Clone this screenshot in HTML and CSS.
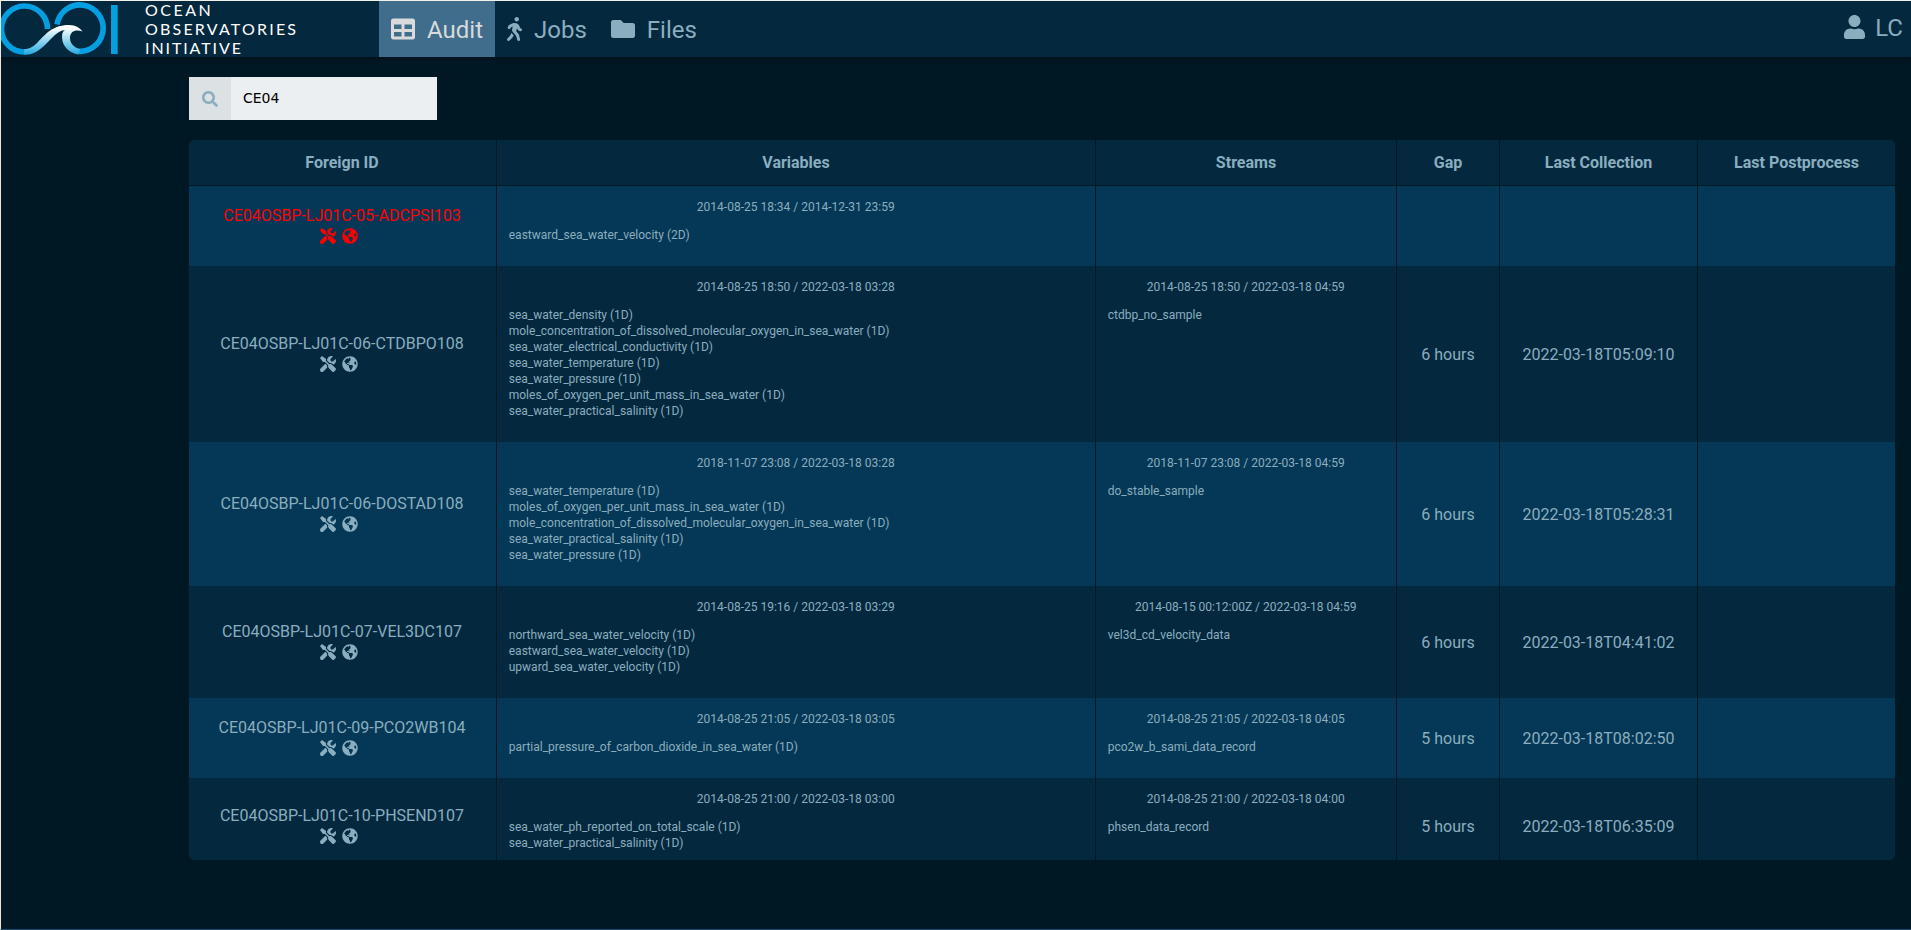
FILE: index.html
```html
<!DOCTYPE html>
<html lang="en">
<head>
<meta charset="utf-8">
<title>OOI Audit</title>
<link rel="stylesheet" href="styles.css">
</head>
<body>
<svg class="defs" width="0" height="0">
  <symbol id="tools" viewBox="0 0 512 512"><path d="M501.100 395.700L384 278.600c-23.100-23.100-57.600-27.600-85.400-13.900L192 158.100V96L64 0 0 64l96 128h62.100l106.600 106.600c-13.600 27.800-9.200 62.300 13.900 85.400l117.100 117.100c14.600 14.600 38.200 14.600 52.700 0l52.700-52.700c14.500-14.600 14.500-38.200 0-52.700zM331.700 225c28.300 0 54.900 11 74.900 31l19.400 19.400c15.800-6.900 30.800-16.500 43.800-29.500 37.100-37.100 49.700-89.300 37.900-136.700-2.200-9-13.500-12.100-20.100-5.500l-74.400 74.400-67.900-11.300L334 98.900l74.400-74.400c6.600-6.600 3.400-17.900-5.700-20.200-47.400-11.700-99.600.9-136.600 37.900-28.500 28.500-41.900 66.100-41.200 103.600l82.100 82.100c8.100-1.900 16.500-2.900 24.700-2.900zm-103.900 82l-56.700-56.700L18.700 402.800c-25 25-25 65.500 0 90.500s65.500 25 90.500 0l123.600-123.600c-7.600-19.900-9.900-41.600-5-62.700z"/></symbol>
  <symbol id="globe" viewBox="0 0 496 512"><path d="M248 8C111 8 0 119 0 256s111 248 248 248 248-111 248-248S385 8 248 8zm82.300 357.600c-3.900 3.900-8 8-11.300 11.300-3 3-5.100 6.700-6.200 10.700-1.500 5.700-2.700 11.400-4.800 16.900L290.700 451c-13.700 3-28 5-42.700 5v-27.300c1.700-12.600-7.600-36.300-22.600-51.300-6-6-9.400-14.100-9.400-22.600v-32c0-11.600-6.300-22.300-16.500-28-14.400-8-34.800-19.100-48.800-26.100-11.500-5.800-22.100-13.100-31.700-21.800l-.8-.7c-6.900-6.200-13-13.300-18.200-21.100-9.300-13.700-24.500-36.200-34.400-50.800 20.300-45.200 57-81.500 102.500-101.200l24 12c10.600 5.300 23.200-2.400 23.200-14.300v-11.300c8-1.300 16.100-2.100 24.400-2.400l28.300 28.300c6.200 6.200 6.200 16.400 0 22.600l-4.700 4.700-10.300 10.300c-3.100 3.100-3.100 8.200 0 11.300l4.700 4.700c3.100 3.100 3.100 8.200 0 11.300l-8 8c-1.500 1.500-3.500 2.300-5.700 2.300h-9c-2.100 0-4.100.8-5.600 2.300l-9.900 9.700c-2.500 2.500-3.200 6.300-1.600 9.400l15.600 31.200c2.700 5.300-1.200 11.600-7.100 11.600h-5.600c-1.900 0-3.800-.7-5.200-1.900l-9.300-8.100c-4.200-3.700-10-4.800-15.300-3.100l-31.200 10.400c-4.900 1.600-8.200 6.200-8.200 11.300 0 4.500 2.500 8.600 6.600 10.700l11.100 5.500c9.400 4.700 19.800 7.200 30.300 7.200s22.600 27.300 32 32h66.700c8.500 0 16.600 3.400 22.600 9.400l13.700 13.700c5.700 5.700 8.900 13.500 8.900 21.600 0 12.400-4.900 24.300-13.700 33zM417 274.200c-5.800-1.400-10.800-5-14.200-9.900l-18-27c-5.300-8-5.300-18.500 0-26.600l19.600-29.400c2.300-3.500 5.500-6.300 9.300-8.200l13-6.500C440.200 193.600 448 223.900 448 256c0 8.700-.7 17.200-1.900 25.500z"/></symbol>
</svg>
<header class="navbar">
  <div class="brand">
    <svg class="logo" viewBox="0 0 120 57">
      <defs><linearGradient id="wave" x1="0" y1="0" x2="0" y2="1"><stop offset="0.1" stop-color="#fff"/><stop offset="1" stop-color="#20a8e0"/></linearGradient></defs>
      <g fill="none" stroke="#049fe0" stroke-width="5.600">
        <path d="M47.500 29A23 23 0 1 0 24.500 52"/>
        <path d="M57 24.500A23.200 23.200 0 1 1 76 51"/>
      </g>
      <path d="M36 44C46 34 52 25 69 25C76 25 80 28 82.500 31.500C76 29 70 31 70 38C70 44 74 47 80 49.300L79 54.500C68 53 62 45 62 37C62 33 63 31 65 30C55 31 50 42 39 50C34 53.500 30 54.800 24 54.800L24 49.200C29 49 32 47.500 36 44Z" fill="url(#wave)"/>
      <rect x="111" y="5" width="6.700" height="49" fill="#049fe0"/>
    </svg>
    <div class="brand-name"><span class="l1">OCEAN</span><span class="l2">OBSERVATORIES</span><span class="l3">INITIATIVE</span></div>
  </div>
  <nav class="menu">
    <a class="item active"><svg viewBox="0 0 512 512"><path d="M464 32H48C21.500 32 0 53.500 0 80v352c0 26.500 21.500 48 48 48h416c26.500 0 48-21.500 48-48V80c0-26.500-21.500-48-48-48zM224 416H64v-96h160v96zm0-160H64v-96h160v96zm224 160H288v-96h160v96zm0-160H288v-96h160v96z"/></svg><span>Audit</span></a>
    <a class="item jobs"><svg viewBox="0 0 320 512"><path d="M208 96c26.500 0 48-21.500 48-48S234.500 0 208 0s-48 21.500-48 48 21.500 48 48 48zm94.500 149.100l-23.300-11.800-9.700-29.400c-14.700-44.600-55.700-75.800-102.200-75.900-36-.1-55.900 10.100-93.300 25.200-21.600 8.700-39.300 25.200-49.700 46.200L17.600 213c-7.800 15.800-1.500 35 14.200 42.900 15.600 7.900 34.600 1.500 42.500-14.300L81 228c3.500-7 9.300-12.500 16.500-15.400l26.800-10.800-15.200 60.700c-5.200 20.800.4 42.900 14.900 58.800l59.900 65.400c7.200 7.900 12.300 17.400 14.900 27.700l18.300 73.300c4.300 17.100 21.700 27.600 38.800 23.300 17.100-4.300 27.600-21.700 23.300-38.800l-22.200-89c-2.600-10.300-7.700-19.900-14.900-27.700l-45.500-49.700 17.200-68.700 5.500 16.500c5.300 16.100 16.700 29.400 31.700 37l23.300 11.800c15.600 7.900 34.600 1.500 42.500-14.300 7.700-15.700 1.400-35.100-14.300-43zM73.600 385.800c-3.200 8.100-8 15.400-14.200 21.500l-50 50.100c-12.500 12.500-12.500 32.800 0 45.300s32.700 12.500 45.200 0l59.400-59.400c6.100-6.100 10.900-13.400 14.200-21.500l13.500-33.800c-55.300-60.300-38.700-41.800-47.400-53.700l-20.700 51.500z"/></svg><span>Jobs</span></a>
    <a class="item"><svg viewBox="0 0 512 512"><path d="M464 128H272l-64-64H48C21.500 64 0 85.500 0 112v288c0 26.500 21.500 48 48 48h416c26.500 0 48-21.500 48-48V176c0-26.500-21.500-48-48-48z"/></svg><span>Files</span></a>
  </nav>
  <div class="user"><svg viewBox="0 0 448 512"><path d="M224 256c70.700 0 128-57.300 128-128S294.700 0 224 0 96 57.300 96 128s57.300 128 128 128zm89.600 32h-16.700c-22.200 10.200-46.900 16-72.900 16s-50.600-5.800-72.900-16h-16.700C60.200 288 0 348.200 0 422.400V464c0 26.500 21.500 48 48 48h352c26.500 0 48-21.500 48-48v-41.600c0-74.200-60.200-134.400-134.400-134.400z"/></svg><span>LC</span></div>
</header>
<main class="content">
  <div class="search">
    <span class="search-icon"><svg viewBox="0 0 512 512"><path d="M505 442.700L405.300 343c-4.500-4.500-10.600-7-17-7H372c27.600-35.300 44-79.700 44-128C416 93.100 322.900 0 208 0S0 93.100 0 208s93.100 208 208 208c48.300 0 92.700-16.400 128-44v16.300c0 6.400 2.500 12.500 7 17l99.700 99.700c9.400 9.400 24.600 9.400 33.900 0l28.300-28.300c9.400-9.400 9.400-24.600.1-34zM208 336c-70.700 0-128-57.200-128-128 0-70.700 57.200-128 128-128 70.700 0 128 57.200 128 128 0 70.700-57.200 128-128 128z"/></svg></span>
    <input class="search-input" type="text" value="CE04">
  </div>
  <div class="table">
    <div class="row head"><div>Foreign ID</div><div>Variables</div><div>Streams</div><div>Gap</div><div>Last Collection</div><div>Last Postprocess</div></div>
    <div class="row odd error">
      <div class="id"><span>CE04OSBP-LJ01C-05-ADCPSI103</span><p class="icons"><svg><use href="#tools"/></svg><svg><use href="#globe"/></svg></p></div>
      <div class="list"><p>2014-08-25 18:34 / 2014-12-31 23:59</p><ul><li>eastward_sea_water_velocity (2D)</li></ul></div>
      <div class="list"></div><div class="val"></div><div class="val"></div><div class="val"></div>
    </div>
    <div class="row">
      <div class="id"><span>CE04OSBP-LJ01C-06-CTDBPO108</span><p class="icons"><svg><use href="#tools"/></svg><svg><use href="#globe"/></svg></p></div>
      <div class="list"><p>2014-08-25 18:50 / 2022-03-18 03:28</p><ul><li>sea_water_density (1D)</li><li>mole_concentration_of_dissolved_molecular_oxygen_in_sea_water (1D)</li><li>sea_water_electrical_conductivity (1D)</li><li>sea_water_temperature (1D)</li><li>sea_water_pressure (1D)</li><li>moles_of_oxygen_per_unit_mass_in_sea_water (1D)</li><li>sea_water_practical_salinity (1D)</li></ul></div>
      <div class="list"><p>2014-08-25 18:50 / 2022-03-18 04:59</p><ul><li>ctdbp_no_sample</li></ul></div>
      <div class="val">6 hours</div><div class="val">2022-03-18T05:09:10</div><div class="val"></div>
    </div>
    <div class="row odd">
      <div class="id"><span>CE04OSBP-LJ01C-06-DOSTAD108</span><p class="icons"><svg><use href="#tools"/></svg><svg><use href="#globe"/></svg></p></div>
      <div class="list"><p>2018-11-07 23:08 / 2022-03-18 03:28</p><ul><li>sea_water_temperature (1D)</li><li>moles_of_oxygen_per_unit_mass_in_sea_water (1D)</li><li>mole_concentration_of_dissolved_molecular_oxygen_in_sea_water (1D)</li><li>sea_water_practical_salinity (1D)</li><li>sea_water_pressure (1D)</li></ul></div>
      <div class="list"><p>2018-11-07 23:08 / 2022-03-18 04:59</p><ul><li>do_stable_sample</li></ul></div>
      <div class="val">6 hours</div><div class="val">2022-03-18T05:28:31</div><div class="val"></div>
    </div>
    <div class="row">
      <div class="id"><span>CE04OSBP-LJ01C-07-VEL3DC107</span><p class="icons"><svg><use href="#tools"/></svg><svg><use href="#globe"/></svg></p></div>
      <div class="list"><p>2014-08-25 19:16 / 2022-03-18 03:29</p><ul><li>northward_sea_water_velocity (1D)</li><li>eastward_sea_water_velocity (1D)</li><li>upward_sea_water_velocity (1D)</li></ul></div>
      <div class="list"><p>2014-08-15 00:12:00Z / 2022-03-18 04:59</p><ul><li>vel3d_cd_velocity_data</li></ul></div>
      <div class="val">6 hours</div><div class="val">2022-03-18T04:41:02</div><div class="val"></div>
    </div>
    <div class="row odd">
      <div class="id"><span>CE04OSBP-LJ01C-09-PCO2WB104</span><p class="icons"><svg><use href="#tools"/></svg><svg><use href="#globe"/></svg></p></div>
      <div class="list"><p>2014-08-25 21:05 / 2022-03-18 03:05</p><ul><li>partial_pressure_of_carbon_dioxide_in_sea_water (1D)</li></ul></div>
      <div class="list"><p>2014-08-25 21:05 / 2022-03-18 04:05</p><ul><li>pco2w_b_sami_data_record</li></ul></div>
      <div class="val">5 hours</div><div class="val">2022-03-18T08:02:50</div><div class="val"></div>
    </div>
    <div class="row">
      <div class="id"><span>CE04OSBP-LJ01C-10-PHSEND107</span><p class="icons"><svg><use href="#tools"/></svg><svg><use href="#globe"/></svg></p></div>
      <div class="list"><p>2014-08-25 21:00 / 2022-03-18 03:00</p><ul><li>sea_water_ph_reported_on_total_scale (1D)</li><li>sea_water_practical_salinity (1D)</li></ul></div>
      <div class="list"><p>2014-08-25 21:00 / 2022-03-18 04:00</p><ul><li>phsen_data_record</li></ul></div>
      <div class="val">5 hours</div><div class="val">2022-03-18T06:35:09</div><div class="val"></div>
    </div>
  </div>
</main>
</body>
</html>
```
FILE: styles.css
```css
* { box-sizing: border-box; }
body {
  margin: 0;
  height: 930px;
  overflow: hidden;
  background: #001824;
  color: #8aaebf;
  font: 16px/16px Roboto, sans-serif;
  border: 1px solid #f0f2ea;
  border-left-color: #f6e3d2;
  border-right: 0;
  border-bottom-color: #1c4a74;
  display: flex;
  flex-direction: column;
}
svg { fill: currentColor; flex: none; }
.defs { position: absolute; }
.navbar { height: 56px; flex: none; display: flex; background: #04293f; box-shadow: 0 1px 4px rgba(0, 0, 0, .4); }
.brand { display: flex; width: 378px; }
.logo { width: 120px; height: 57px; margin: -1px 0 0 -1px; }
.brand-name { display: flex; flex-direction: column; margin: -1px 0 0 25px; font: 16px/19px Lato, sans-serif; color: #fff; white-space: nowrap; }
.l1 { letter-spacing: 2.500px; }
.l2 { letter-spacing: 2.200px; }
.l3 { letter-spacing: 1.900px; }
.menu { display: flex; }
.item { display: flex; align-items: center; gap: 12px; padding: 0 12px; font-size: 24px; line-height: 28px; }
.item span { padding-top: 2px; }
.item svg { width: 24px; height: 24px; }
.item.active { background: #406d8c; color: #d8dadb; width: 116px; }
.item.jobs svg { width: 15px; }
.user { display: flex; align-items: center; gap: 10px; margin-left: auto; padding: 0 8px 4px 0; font-size: 24px; }
.user svg { width: 21px; height: 24px; }
.user span { padding-top: 2px; }
.content { padding: 20px 16px 0 188px; }
.search { display: flex; width: 248px; height: 43px; }
.search-icon { width: 42px; background: #dce1e3; display: flex; align-items: center; justify-content: center; }
.search-icon svg { width: 16px; height: 16px; }
.search-input { width: 206px; border: 0; padding: 0 0 1px 12px; background: #ebeff2; color: #000; font: 14px "DejaVu Sans", sans-serif; outline: 0; }
.table { margin-top: 20px; border-radius: 5px; overflow: hidden; width: 1706px; height: 720px; }
.row { display: grid; grid-template-columns: 307px 599px 301px 103px 198px 198px; background: #04293f; }
.row > div + div { border-left: 1px solid #001824; }
.row.odd { background: #053856; }
.head { height: 46px; border-bottom: 1px solid #001824; font-weight: 700; }
.head > div { display: flex; align-items: center; justify-content: center; }
.head > div:first-child { padding-right: 1px; }
.id, .val { display: flex; flex-direction: column; align-items: center; justify-content: center; }
.id { padding: 0 1px 1px 0; }
.val { padding-top: 2px; }
.error .id { color: #f00; }
.icons { display: flex; gap: 6px; margin: 4px 7px 0 0; }
.icons svg { width: 16px; height: 16px; }
.list { padding: 13px 12.250px 23px 11.750px; font-size: 12px; line-height: 16px; }
.list p { margin: 0 0 12px; text-align: center; }
.list ul { margin: 0; padding: 0; list-style: none; }
```
